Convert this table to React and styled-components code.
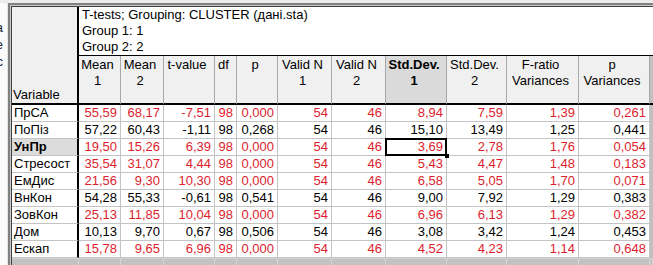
import React from "react";
import styled, { createGlobalStyle, css } from "styled-components";

const Global = createGlobalStyle`
  html, body { margin: 0; padding: 0; background: #ececec; }
  body { font-family: "Liberation Sans", Arial, sans-serif; font-size: 13px; color: #000; }
  * { box-sizing: border-box; }
`;

const Page = styled.div`
  display: flex;
  height: 265px;
  overflow: hidden;
`;

const LeftStrip = styled.div`
  width: 7px;
  margin-top: 3px;
  background: #fbfbfb;
  padding-top: 16px;
  overflow: hidden;
  color: #1c2a3a;
  font-size: 13px;
`;

const StripLine = styled.div`
  display: flex;
  justify-content: flex-end;
  padding-right: 4px;
  height: 17px;
  line-height: 17px;
  white-space: nowrap;
`;

const Frame = styled.div`
  flex: 1;
  margin-top: 3px;
  border-left: 1px solid #e4e4e4;
  padding: 4px 0 0 4px;
  box-shadow: inset 2px 2px 0 #808080, inset 3px 3px 0 #cacaca, inset 4px 4px 0 #404040;
  background: #c0c0c0;
  display: flex;
`;

const Grid = styled.div`
  flex: 1;
  display: grid;
  grid-template-columns: 67px 42px 43px 51px 22px 41px 54px 54px 61px 60px 72px 71px 1fr;
  grid-template-rows: 49px 49px repeat(9, 17px) 1fr;
  line-height: 16px;
`;

const VarHead = styled.div`
  grid-column: 1;
  grid-row: 1 / span 2;
  background: #f0f0f0;
  border-right: 2px solid #000;
  border-bottom: 2px solid #000;
  display: flex;
  align-items: flex-end;
  padding: 0 0 0 1px;
`;

const Title = styled.div`
  grid-column: 2 / -1;
  grid-row: 1;
  background: #fff;
  border-bottom: 1px solid #000;
  padding-left: 3px;
  white-space: nowrap;
`;

const ColHead = styled.div`
  background: ${(p) => (p.$active ? "#dadada" : "#f0f0f0")};
  font-weight: ${(p) => (p.$active ? "bold" : "normal")};
  border-right: 1px solid #a8a8a8;
  border-bottom: 2px solid #000;
  text-align: center;
  padding: 1px 4px 0 0;
  white-space: nowrap;
  overflow: hidden;
`;

const HeadFill = styled.div`
  background: #c0c0c0;
  border-bottom: 2px solid #000;
`;

const RowLabel = styled.div`
  background: ${(p) => (p.$active ? "#dcdcdc" : "#fff")};
  font-weight: ${(p) => (p.$active ? "bold" : "normal")};
  border-right: 2px solid #000;
  border-bottom: 1px solid #c4c4c4;
  padding-left: 2px;
  white-space: nowrap;
  overflow: hidden;
`;

const Cell = styled.div`
  position: relative;
  background: #fff;
  color: ${(p) => (p.$red ? "#dc1e2d" : "#000")};
  border-right: 1px solid #c4c4c4;
  border-bottom: 1px solid #c4c4c4;
  text-align: right;
  padding-right: 3px;
  white-space: nowrap;
  ${(p) =>
    p.$selected &&
    css`
      &::after {
        content: "";
        position: absolute;
        left: -1px;
        top: -1px;
        right: -1px;
        bottom: -1px;
        border: 2px solid #000;
      }
      &::before {
        content: "";
        position: absolute;
        right: -3px;
        bottom: -3px;
        width: 4px;
        height: 4px;
        background: #000;
        z-index: 1;
      }
    `}
`;

const RowFill = styled.div`
  background: #c0c0c0;
`;

const BottomCell = styled.div`
  background: #c2c2c2;
  border-top: 1px solid #d2d2d2;
  border-right: 1px solid #d6d6d6;
`;

const headers = [
  ["Mean", "1"],
  ["Mean", "2"],
  ["t-value"],
  ["df"],
  ["p"],
  ["Valid N", "1"],
  ["Valid N", "2"],
  ["Std.Dev.", "1"],
  ["Std.Dev.", "2"],
  ["F-ratio", "Variances"],
  ["p", "Variances"],
];

const rows = [
  ["ПрСА", true, "55,59 68,17 -7,51 98 0,000 54 46 8,94 7,59 1,39 0,261"],
  ["ПоПіз", false, "57,22 60,43 -1,11 98 0,268 54 46 15,10 13,49 1,25 0,441"],
  ["УнПр", true, "19,50 15,26 6,39 98 0,000 54 46 3,69 2,78 1,76 0,054"],
  ["Стресост", true, "35,54 31,07 4,44 98 0,000 54 46 5,43 4,47 1,48 0,183"],
  ["ЕмДис", true, "21,56 9,30 10,30 98 0,000 54 46 6,58 5,05 1,70 0,071"],
  ["ВнКон", false, "54,28 55,33 -0,61 98 0,541 54 46 9,00 7,92 1,29 0,383"],
  ["ЗовКон", true, "25,13 11,85 10,04 98 0,000 54 46 6,96 6,13 1,29 0,382"],
  ["Дом", false, "10,13 9,70 0,67 98 0,506 54 46 3,08 3,42 1,24 0,453"],
  ["Ескап", true, "15,78 9,65 6,96 98 0,000 54 46 4,52 4,23 1,14 0,648"],
];

export default function App() {
  return (
    <>
      <Global />
      <Page>
        <LeftStrip>
          <StripLine>а</StripLine>
          <StripLine>е</StripLine>
          <StripLine>с</StripLine>
        </LeftStrip>
        <Frame>
          <Grid>
            <VarHead>Variable</VarHead>
            <Title>
              <div>T-tests; Grouping: CLUSTER (дані.sta)</div>
              <div>Group 1: 1</div>
              <div>Group 2: 2</div>
            </Title>
            {headers.map((h, i) => (
              <ColHead key={i} $active={i === 7}>
                {h.map((l, j) => (
                  <div key={j}>{l}</div>
                ))}
              </ColHead>
            ))}
            <HeadFill />
            {rows.map(([label, red, vals], r) => (
              <React.Fragment key={label}>
                <RowLabel $active={r === 2}>{label}</RowLabel>
                {vals.split(" ").map((v, c) => (
                  <Cell key={c} $red={red} $selected={r === 2 && c === 7}>
                    {v}
                  </Cell>
                ))}
                <RowFill />
              </React.Fragment>
            ))}
            {Array.from({ length: 13 }).map((_, i) => (
              <BottomCell key={i} />
            ))}
          </Grid>
        </Frame>
      </Page>
    </>
  );
}
